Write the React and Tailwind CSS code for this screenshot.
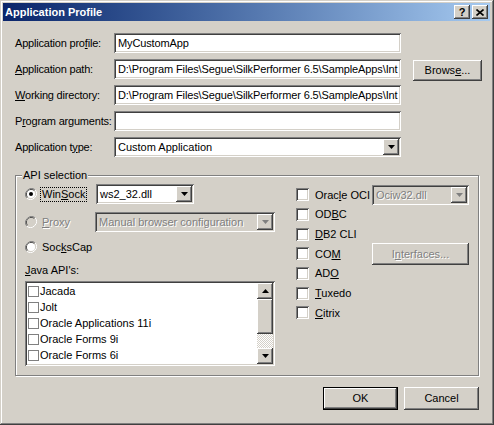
import React from 'react';

const sunken = 'shadow-[inset_1px_1px_#808080,inset_-1px_-1px_#ffffff,inset_2px_2px_#404040,inset_-2px_-2px_#d4d0c8]';
const raised = 'shadow-[inset_-1px_-1px_#404040,inset_1px_1px_#ffffff,inset_-2px_-2px_#808080,inset_2px_2px_#d4d0c8]';
const disabledText = 'text-[#808080] [text-shadow:1px_1px_0_#ffffff]';

function Arrow({ up, disabled }) {
    return (
        <svg width="7" height="4" viewBox="0 0 7 4" className={up ? 'rotate-180' : ''}>
            <path d="M0 0h7L3.5 4z" fill={disabled ? '#808080' : '#000'} />
        </svg>
    );
}

function DropButton({ disabled }) {
    return (
        <div className={`w-[16px] h-[16px] bg-[#d4d0c8] flex items-center justify-center ${raised}`}>
            <Arrow disabled={disabled} />
        </div>
    );
}

function TextBox({ value, className = '' }) {
    return (
        <div className={`h-[20px] bg-white ${sunken} flex items-center px-[4px] overflow-hidden whitespace-nowrap tracking-[-0.12px] ${className}`}>
            {value}
        </div>
    );
}

function Combo({ value, width, disabled }) {
    return (
        <div
            className={`h-[20px] ${disabled ? 'bg-[#d4d0c8]' : 'bg-white'} ${sunken} flex items-center p-[2px] shrink-0`}
            style={{ width }}
        >
            <span className={`flex-1 pl-[2px] whitespace-nowrap overflow-hidden ${disabled ? disabledText : ''}`}>{value}</span>
            <DropButton disabled={disabled} />
        </div>
    );
}

function Button({ children, className = '', disabled }) {
    return (
        <div className={`bg-[#d4d0c8] flex items-center justify-center ${raised} ${disabled ? disabledText : ''} ${className}`}>
            {children}
        </div>
    );
}

function Radio({ checked, disabled }) {
    return (
        <svg width="12" height="12" viewBox="0 0 12 12" className="shrink-0">
            <path d="M10.2 1.8A6 6 0 0 0 1.8 10.2" stroke="#808080" strokeWidth="1" fill="none" />
            <path d="M1.8 10.2A6 6 0 0 0 10.2 1.8" stroke="#ffffff" strokeWidth="1" fill="none" />
            <path d="M9.5 2.5A5 5 0 0 0 2.5 9.5" stroke="#404040" strokeWidth="1" fill="none" />
            <path d="M2.5 9.5A5 5 0 0 0 9.5 2.5" stroke="#d4d0c8" strokeWidth="1" fill="none" />
            <circle cx="6" cy="6" r="4" fill={disabled ? '#d4d0c8' : '#ffffff'} />
            {checked && <circle cx="6" cy="6" r="2" fill="#000" />}
        </svg>
    );
}

function Check() {
    return <div className={`w-[13px] h-[13px] bg-white shrink-0 ${sunken}`} />;
}

function Row({ label, children }) {
    return (
        <div className="flex items-center h-[20px]">
            <div className="w-[99px] shrink-0 whitespace-nowrap tracking-[-0.2px]">{label}</div>
            {children}
        </div>
    );
}

const javaApis = ['Jacada', 'Jolt', 'Oracle Applications 11i', 'Oracle Forms 9i', 'Oracle Forms 6i'];
const path = 'D:\\Program Files\\Segue\\SilkPerformer 6.5\\SampleApps\\Int';

export default function App() {
    return (
        <div className="w-[494px] h-[425px] bg-[#d4d0c8] p-[3px] flex flex-col font-['Liberation_Sans',Arial,sans-serif] text-[11px] text-black shadow-[inset_-1px_-1px_#404040,inset_1px_1px_#d4d0c8,inset_-2px_-2px_#808080,inset_2px_2px_#ffffff]">
            <div className="h-[18px] bg-gradient-to-r from-[#0a246a] to-[#a6caf0] flex items-center pl-[2px] pr-[2px] mr-px">
                <span className="text-white font-bold text-[11px] flex-1">Application Profile</span>
                <Button className="w-[16px] h-[14px] font-bold text-[11px] leading-none">?</Button>
                <Button className="w-[16px] h-[14px] ml-[2px]">
                    <svg width="8" height="7" viewBox="0 0 8 7">
                        <path d="M0.5 0.5l7 6M7.5 0.5l-7 6" stroke="#000" strokeWidth="1.6" />
                    </svg>
                </Button>
            </div>

            <div className="flex flex-col pt-[12px] pl-[12px] gap-[6px]">
                <Row label={<span>Application pro<u>f</u>ile:</span>}>
                    <TextBox value="MyCustomApp" className="w-[287px]" />
                </Row>
                <Row label={<span><u>A</u>pplication path:</span>}>
                    <TextBox value={path} className="w-[287px]" />
                    <Button className="w-[69px] h-[21px] ml-[12px] mt-[2px]">Brows<u>e</u>...</Button>
                </Row>
                <Row label={<span><u>W</u>orking directory:</span>}>
                    <TextBox value={path} className="w-[287px]" />
                </Row>
                <Row label={<span>P<u>r</u>ogram arguments:</span>}>
                    <TextBox value="" className="w-[287px]" />
                </Row>
                <Row label={<span>Application t<u>y</u>pe:</span>}>
                    <Combo value="Custom Application" width={287} />
                </Row>
            </div>

            <div className="mt-[18px] ml-[12px] w-[464px] h-[201px] relative border border-[#808080] shadow-[1px_1px_0_#ffffff,inset_1px_1px_0_#ffffff] flex pl-[9px] pt-[8px]">
                <span className="absolute -top-[7px] left-[6px] bg-[#d4d0c8] px-[1px] leading-[13px]">API selection</span>

                <div className="w-[250px] flex flex-col">
                    <div className="flex items-center h-[20px]">
                        <div className="w-[71px] flex items-center">
                            <Radio checked />
                            <span className="ml-[4px] outline-1 outline-dotted outline-black px-[1px] leading-[13px]">Win<u>S</u>ock</span>
                        </div>
                        <Combo value="ws2_32.dll" width={98} />
                    </div>
                    <div className="flex items-center h-[20px] mt-[8px]">
                        <div className="w-[71px] flex items-center">
                            <Radio disabled />
                            <span className={`ml-[5px] ${disabledText}`}><u>P</u>roxy</span>
                        </div>
                        <Combo value="Manual browser configuration" width={180} disabled />
                    </div>
                    <div className="flex items-center h-[18px] mt-[6px]">
                        <Radio />
                        <span className="ml-[5px]">Soc<u>k</u>sCap</span>
                    </div>
                    <div className="mt-[8px] leading-[13px]"><u>J</u>ava API's:</div>
                    <div className={`mt-[4px] h-[85px] bg-white ${sunken} p-[2px] flex`}>
                        <div className="flex-1 flex flex-col">
                            {javaApis.map((name) => (
                                <div key={name} className="h-[16px] flex items-center">
                                    <div className="w-[11px] h-[11px] border border-[#808080] bg-white ml-[1px] mr-[1px]" />
                                    <span>{name}</span>
                                </div>
                            ))}
                        </div>
                        <div className="w-[16px] flex flex-col">
                            <div className={`h-[16px] bg-[#d4d0c8] flex items-center justify-center ${raised}`}>
                                <Arrow up />
                            </div>
                            <div className={`h-[35px] bg-[#d4d0c8] ${raised}`} />
                            <div className="flex-1 bg-[repeating-conic-gradient(#d4d0c8_0%_25%,#ffffff_0%_50%)] bg-[length:2px_2px]" />
                            <div className={`h-[16px] bg-[#d4d0c8] flex items-center justify-center ${raised}`}>
                                <Arrow />
                            </div>
                        </div>
                    </div>
                </div>

                <div className="ml-[21px] grid grid-cols-[76px_97px] grid-rows-[repeat(7,19.7px)] mt-[1px] h-fit">
                    <div className="flex items-center"><Check /><span className="ml-[6px]">Orac<u>l</u>e OCI</span></div>
                    <div className="flex items-center"><Combo value="Ociw32.dll" width={97} disabled /></div>
                    <div className="flex items-center col-start-1"><Check /><span className="ml-[6px]">OD<u>B</u>C</span></div>
                    <div className="flex items-center col-start-1"><Check /><span className="ml-[6px]"><u>D</u>B2 CLI</span></div>
                    <div className="flex items-center col-start-1"><Check /><span className="ml-[6px]">CO<u>M</u></span></div>
                    <div className="flex items-center col-start-2 row-start-4">
                        <Button className="w-[97px] h-[22px]" disabled>I<u>n</u>terfaces...</Button>
                    </div>
                    <div className="flex items-center col-start-1"><Check /><span className="ml-[6px]">AD<u>O</u></span></div>
                    <div className="flex items-center col-start-1"><Check /><span className="ml-[6px]"><u>T</u>uxedo</span></div>
                    <div className="flex items-center col-start-1"><Check /><span className="ml-[6px]"><u>C</u>itrix</span></div>
                </div>
            </div>

            <div className="flex justify-end mt-[11px] pr-[12px] gap-[6px]">
                <Button className="w-[75px] h-[23px] outline outline-1 outline-black -outline-offset-1 shadow-[inset_-2px_-2px_#404040,inset_2px_2px_#ffffff,inset_-3px_-3px_#808080]">OK</Button>
                <Button className="w-[75px] h-[23px]">Cancel</Button>
            </div>
        </div>
    );
}
